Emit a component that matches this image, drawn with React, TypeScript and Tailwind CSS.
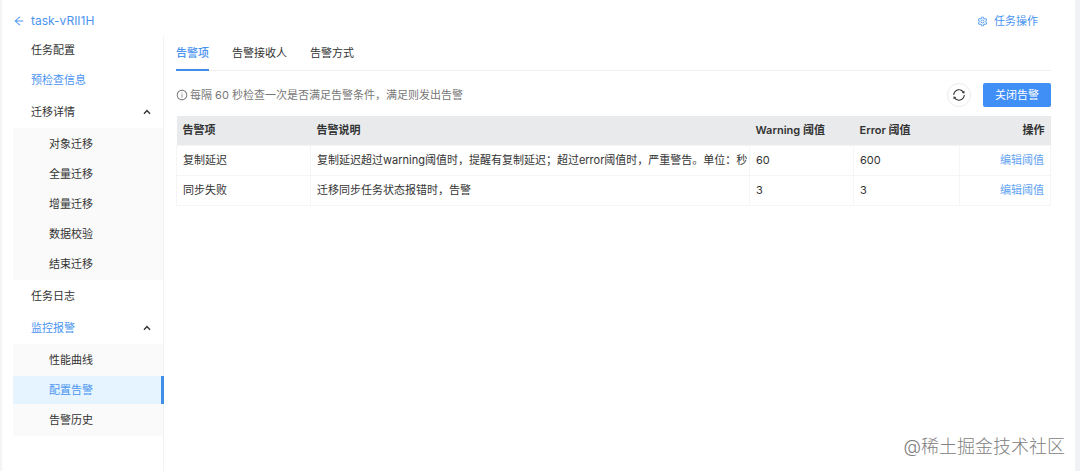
import { AiOutlineArrowLeft, AiOutlineInfoCircle, AiOutlineSetting, AiOutlineSync } from "react-icons/ai";

const menu = [
    { name: "任务配置" },
    { name: "预检查信息", active: true },
    { name: "迁移详情", children: ["对象迁移", "全量迁移", "增量迁移", "数据校验", "结束迁移"] },
    { name: "任务日志" },
    { name: "监控报警", active: true, children: ["性能曲线", "配置告警", "告警历史"] },
];

const selected = "配置告警";

const tabs = ["告警项", "告警接收人", "告警方式"];

const rules = [
    {
        name: "复制延迟",
        description: "复制延迟超过warning阈值时，提醒有复制延迟；超过error阈值时，严重警告。单位：秒",
        warning: 60,
        error: 600,
    },
    {
        name: "同步失败",
        description: "迁移同步任务状态报错时，告警",
        warning: 3,
        error: 3,
    },
];

function Chevron() {
    return (
        <svg width="8" height="6" viewBox="0 0 8 6" fill="none" stroke="currentColor" strokeWidth="1.4">
            <path d="M1 4.8 4 1.6l3 3.2" />
        </svg>
    );
}

function Sidebar() {
    return (
        <nav className="w-[151px] shrink-0 border-r border-[#f3f3f3]">
            <ul className="flex flex-col gap-0.5">
                {menu.map((item) => (
                    <li key={item.name} className={item.active ? "text-[#4a94f0]" : "text-[#333333]"}>
                        {item.children ? (
                            <>
                                <button type="button" className="flex h-8 w-full items-center justify-between pr-3 pl-[18px]">
                                    {item.name}
                                    <span className="text-[#333333]"><Chevron /></span>
                                </button>
                                <ul className="flex flex-col gap-0.5 bg-[#fafafa] py-0.5">
                                    {item.children.map((child) => (
                                        <li key={child}>
                                            <a
                                                href="#"
                                                className={`flex h-7 items-center pl-9 ${child === selected ? "-mr-px border-r-3 border-[#3f8ee8] bg-[#e6f4ff] text-[#4a94f0]" : "text-[#333333]"}`}
                                            >
                                                {child}
                                            </a>
                                        </li>
                                    ))}
                                </ul>
                            </>
                        ) : (
                            <a href="#" className="flex h-7 items-center pl-[18px]">{item.name}</a>
                        )}
                    </li>
                ))}
            </ul>
        </nav>
    );
}

function RuleTable() {
    return (
        <table className="mt-[9px] w-full table-fixed border-collapse text-left text-[#333333]">
            <thead>
                <tr className="h-[29px] bg-[#e8eaec]">
                    <th className="w-[134px] px-1.5 font-semibold">告警项</th>
                    <th className="px-1.5 font-semibold">告警说明</th>
                    <th className="w-[104px] px-1.5 font-semibold whitespace-nowrap">Warning 阈值</th>
                    <th className="w-[106px] px-1.5 font-semibold whitespace-nowrap">Error 阈值</th>
                    <th className="w-[91px] px-1.5 text-right font-semibold">操作</th>
                </tr>
            </thead>
            <tbody>
                {rules.map((rule) => (
                    <tr key={rule.name} className="h-[30px]">
                        <td className="border border-[#f5f5f5] px-1.5">{rule.name}</td>
                        <td className="border border-[#f5f5f5] pl-1.5 whitespace-nowrap">{rule.description}</td>
                        <td className="border border-[#f5f5f5] px-1.5">{rule.warning}</td>
                        <td className="border border-[#f5f5f5] px-1.5">{rule.error}</td>
                        <td className="border border-[#f5f5f5] px-1.5 text-right">
                            <a href="#" className="text-[#62a3f2]">编辑阈值</a>
                        </td>
                    </tr>
                ))}
            </tbody>
        </table>
    );
}

export default function App() {
    return (
        <div className="relative flex min-h-screen flex-col border-r-5 border-l-2 border-r-[#f0f2f5] border-l-[#f3f4f6] bg-white pl-[11px] font-['Inter','Noto_Sans_CJK_SC',sans-serif] text-[11px] leading-4">
            <header className="flex h-9 items-center justify-between pt-1.5 pr-[37px] text-[#4a94f0]">
                <a href="#" className="flex items-center gap-1.5 text-xs">
                    <AiOutlineArrowLeft size={12} />
                    task-vRII1H
                </a>
                <button type="button" className="flex items-center gap-1.5">
                    <AiOutlineSetting size={11} />
                    任务操作
                </button>
            </header>
            <div className="flex grow">
                <Sidebar />
                <main className="min-w-0 grow pr-6 pl-3">
                    <div className="flex gap-[23px] border-b border-[#f0f0f0]">
                        {tabs.map((tab, index) => (
                            <button
                                key={tab}
                                type="button"
                                className={`-mb-px h-[35px] border-b-2 pt-px ${index === 0 ? "border-[#3f8ee8] font-medium text-[#4a94f0]" : "border-transparent text-[#333333]"}`}
                            >
                                {tab}
                            </button>
                        ))}
                    </div>
                    <div className="mt-3 flex items-center justify-between">
                        <p className="flex items-center gap-0.5 text-[#777777]">
                            <AiOutlineInfoCircle size={12} />
                            每隔 60 秒检查一次是否满足告警条件，满足则发出告警
                        </p>
                        <div className="flex items-center gap-3">
                            <button
                                type="button"
                                aria-label="刷新"
                                className="flex size-6 items-center justify-center rounded-full border border-[#ebebeb] text-[#333333]"
                            >
                                <AiOutlineSync size={14} />
                            </button>
                            <button type="button" className="h-6 rounded-xs bg-[#3f8ff7] px-3 text-white">关闭告警</button>
                        </div>
                    </div>
                    <RuleTable />
                </main>
            </div>
            <span className="absolute right-2.5 bottom-2.5 text-lg font-light text-[#808080]">@稀土掘金技术社区</span>
        </div>
    );
}
